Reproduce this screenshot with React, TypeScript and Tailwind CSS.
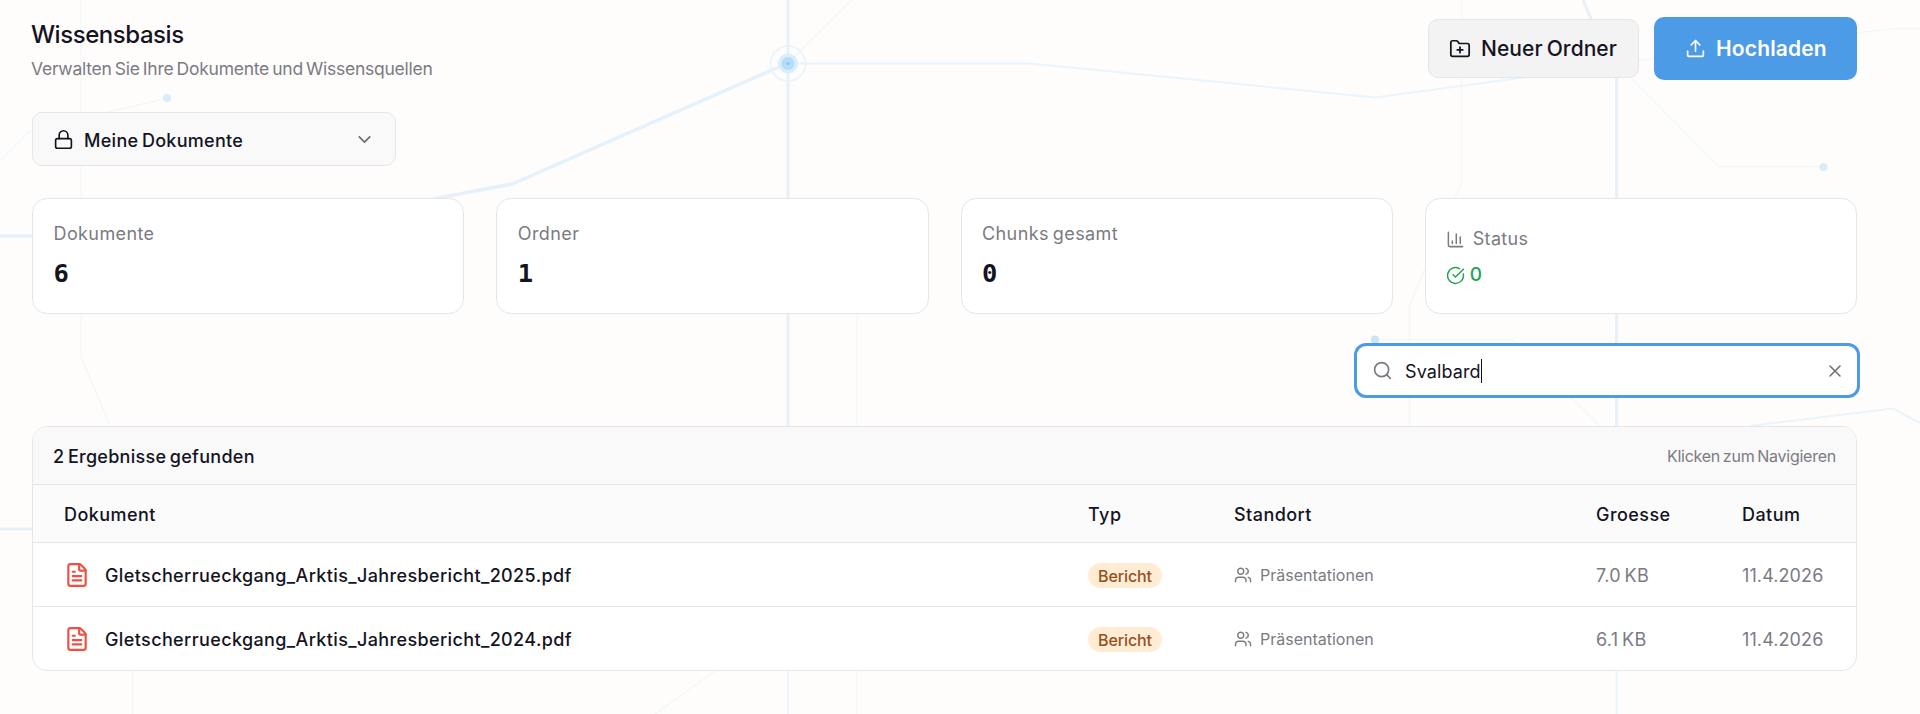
import React from 'react'
import {
  ChartColumn,
  ChevronDown,
  CircleCheckBig,
  FileText,
  FolderPlus,
  Lock,
  Search,
  Upload,
  Users,
  X,
} from 'lucide-react'

interface SearchResult {
  name: string
  type: string
  location: string
  size: string
  date: string
}

const results: SearchResult[] = [
  {
    name: 'Gletscherrueckgang_Arktis_Jahresbericht_2025.pdf',
    type: 'Bericht',
    location: 'Präsentationen',
    size: '7.0 KB',
    date: '11.4.2026',
  },
  {
    name: 'Gletscherrueckgang_Arktis_Jahresbericht_2024.pdf',
    type: 'Bericht',
    location: 'Präsentationen',
    size: '6.1 KB',
    date: '11.4.2026',
  },
]

const stats = [
  { label: 'Dokumente', value: 6 },
  { label: 'Ordner', value: 1 },
  { label: 'Chunks gesamt', value: 0 },
]

const rowGrid = 'grid grid-cols-[1fr_146px_362px_146px_114px] items-center pl-[31px]'

// Faint circuit lines behind the page content
const CircuitBackground: React.FC = () => (
  <svg className="absolute inset-0 w-full h-full" viewBox="0 0 1920 714" fill="none">
    <g stroke="#e6f2fb" strokeWidth="3">
      <path d="M788 0V671M1616.5 671V78L1583 0" />
      <path strokeWidth="3.5" d="M0 236H300L438 198L512 184L788 63" />
      <path d="M0 529H32" />
    </g>
    <g stroke="#eaf4fb" strokeWidth="2">
      <path d="M788 63.5H1030L1375 97.5L1512 79L1640 60" />
      <path d="M1750 426L1893 408.5L1920 423" />
      <path d="M1616.5 671V714" />
      <path d="M788 671V714" stroke="#eef5fa" />
    </g>
    <g stroke="#f2f7fa" strokeWidth="1.5">
      <path d="M1640 60L1893 28.5H1920" />
      <path d="M788 63L852 0" />
      <path d="M81 0V357L110 426" />
      <path d="M0 161L30 131L167 98" />
      <path d="M132.5 671V714" />
      <path d="M857 314V714" />
      <path d="M715 671L655 714" />
      <path d="M1461.5 0V183L1409.5 305V426" />
      <path d="M1632 79L1719 166.5H1823" />
      <path d="M1375 339.5H1512L1600 426" />
    </g>
    <circle cx="788" cy="63.5" r="17.5" stroke="#e8f4fb" strokeWidth="1.5" />
    <circle cx="788" cy="63.5" r="10" fill="#d9eefa" />
    <circle cx="788" cy="63.5" r="6.5" fill="#b5ddf5" />
    <circle cx="788" cy="63.5" r="1.5" fill="#8ec4ee" />
    <circle cx="167" cy="98" r="4" fill="#d8edf9" />
    <circle cx="1823.5" cy="167" r="4" fill="#d8edf9" />
    <circle cx="1375" cy="339.5" r="4" fill="#c9e6f7" />
  </svg>
)

const App: React.FC = () => {
  const [query, setQuery] = React.useState('Svalbard')

  return (
    <div className="relative w-full h-[714px] overflow-hidden bg-[#fefdfc] font-['Inter',sans-serif] text-[#14141f] [word-spacing:-1.5px]">
      <CircuitBackground />
      <div className="relative flex flex-col pt-[17px] pl-8 pr-[63px]">
        <header className="flex justify-between h-[63px]">
          <div>
            <h1 className="-ml-px text-[24px] leading-[36px] font-medium tracking-[-0.45px]">Wissensbasis</h1>
            <p className="mt-px -ml-px text-[17.5px] leading-[30px] tracking-[-0.25px] text-[#7b7b83]">
              Verwalten Sie Ihre Dokumente und Wissensquellen
            </p>
          </div>
          <div className="flex gap-[15px] items-center">
            <button
              type="button"
              className="flex items-center pl-5 w-[211px] h-[59px] bg-[#f3f3f4] rounded-[10px] border border-[#e4e6ea] [word-spacing:-1.5px]"
            >
              <FolderPlus size={22} strokeWidth={1.9} />
              <span className="ml-[10px] text-[21px] font-medium tracking-[0.05px]">Neuer Ordner</span>
            </button>
            <button
              type="button"
              className="flex items-center pl-[31px] w-[203px] h-[63px] text-white bg-[#4c9be6] rounded-[10px]"
            >
              <Upload size={21} strokeWidth={1.9} />
              <span className="ml-[10px] text-[21px] font-semibold tracking-[0.15px]">Hochladen</span>
            </button>
          </div>
        </header>

        <button
          type="button"
          className="flex items-center mt-8 px-[20px] w-[364px] h-[54px] bg-[#f8f8f9]/90 rounded-[10px] border border-[#e4e6ea] [word-spacing:-1.5px]"
        >
          <Lock size={21} strokeWidth={1.9} />
          <span className="mt-[2px] ml-[10px] text-[18px] font-medium tracking-[0.28px]">Meine Dokumente</span>
          <ChevronDown size={21} strokeWidth={1.9} className="ml-auto text-[#6c6c74]" />
        </button>

        <section className="grid grid-cols-4 gap-8 mt-8">
          {stats.map((stat) => (
            <div
              key={stat.label}
              className="pt-[21px] pl-[20.5px] h-[116px] bg-white rounded-[15px] border border-[#e4e6ea]"
            >
              <div className="text-[18px] leading-[28px] tracking-[0.4px] text-[#7b7b83]">{stat.label}</div>
              <div className="mt-[7px] font-['DejaVu_Sans_Mono',monospace] text-[25.5px] leading-[36px] font-bold">
                {stat.value}
              </div>
            </div>
          ))}
          <div className="pt-[26px] pl-[20px] h-[116px] bg-white rounded-[15px] border border-[#e4e6ea]">
            <div className="flex items-center text-[#7b7b83]">
              <ChartColumn size={19} strokeWidth={1.9} />
              <span className="ml-2 text-[18px] leading-[28px] tracking-[0.3px]">Status</span>
            </div>
            <div className="flex items-center mt-[8px] text-[#22a455]">
              <CircleCheckBig size={19} strokeWidth={1.9} />
              <span className="ml-[5px] text-[19px] leading-[28px] font-medium">0</span>
            </div>
          </div>
        </section>

        <div className="flex items-center self-end mt-[29px] -mr-[3px] px-[15px] w-[506px] h-[55px] bg-white rounded-[12px] border-[3px] border-[#4c9be6]">
          <Search size={21} strokeWidth={1.9} className="text-[#7b7b83]" />
          <span className="mt-px ml-[12px] text-[18px] tracking-[0.1px]">{query}</span>
          <span className="w-[1.5px] h-6 bg-[#14141f]" />
          <button type="button" className="ml-auto -mr-[3px] text-[#6c6c74]" onClick={() => setQuery('')}>
            <X size={20} strokeWidth={1.8} />
          </button>
        </div>

        <section className="mt-[28px] bg-white rounded-[15px] border border-[#e4e6ea] overflow-hidden">
          <div className="flex justify-between items-center px-[20px] h-[58px] bg-[#f9f9fa] border-b border-[#e4e6ea]">
            <span className="mt-px text-[18px] font-medium tracking-[0.27px]">2 Ergebnisse gefunden</span>
            <span className="text-[16px] tracking-[-0.24px] text-[#7b7b83]">Klicken zum Navigieren</span>
          </div>
          <div
            className={`${rowGrid} pt-px h-[58px] bg-[#fbfbfc] border-b border-[#e4e6ea] text-[18px] font-medium tracking-[0.45px]`}
          >
            <span>Dokument</span>
            <span>Typ</span>
            <span>Standort</span>
            <span>Groesse</span>
            <span>Datum</span>
          </div>
          {results.map((result) => (
            <div key={result.name} className={`${rowGrid} h-[64px] border-b border-[#e4e6ea] last:h-[63px] last:border-b-0`}>
              <div className="flex items-center">
                <FileText size={26} className="text-[#f04f43]" />
                <span className="mt-px ml-[15px] text-[18px] font-medium tracking-[0.38px]">{result.name}</span>
              </div>
              <div className="flex pt-[2px]">
                <span className="px-[10px] h-[25px] text-[16px] leading-[26px] font-medium tracking-[-0.1px] text-[#96501f] bg-[#ffecd4] rounded-full">
                  {result.type}
                </span>
              </div>
              <div className="flex items-center text-[#7b7b83]">
                <Users size={18} strokeWidth={1.9} />
                <span className="ml-2 text-[16px]">{result.location}</span>
              </div>
              <span className="mt-px text-[18px] tracking-[0.25px] text-[#7b7b83]">{result.size}</span>
              <span className="mt-px text-[18px] tracking-[0.1px] text-[#7b7b83]">{result.date}</span>
            </div>
          ))}
        </section>
      </div>
    </div>
  )
}

export default App
